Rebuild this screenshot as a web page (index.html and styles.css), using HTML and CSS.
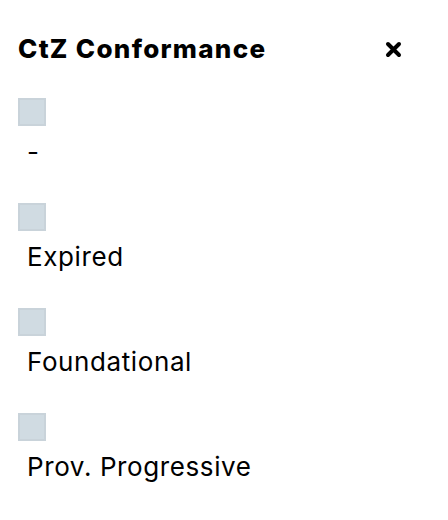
FILE: index.html
```html
<!DOCTYPE html>
<html>
<head>
<meta charset="utf-8">
<link rel="stylesheet" href="styles.css">
</head>
<body>
<div class="panel">
  <div class="header">
    <h2 class="title">CtZ Conformance</h2>
    <button class="close" aria-label="Close">
      <svg width="17" height="17" viewBox="0 0 17 17"><path d="M3 3 L14 14 M14 3 L3 14" stroke="#000" stroke-width="4" stroke-linecap="round"/></svg>
    </button>
  </div>
  <ul class="list">
    <li class="item"><span class="box"></span><span class="label">-</span></li>
    <li class="item"><span class="box"></span><span class="label">Expired</span></li>
    <li class="item"><span class="box"></span><span class="label">Foundational</span></li>
    <li class="item"><span class="box"></span><span class="label">Prov. Progressive</span></li>
  </ul>
</div>
</body>
</html>
```
FILE: styles.css
```css
html, body {
  margin: 0;
  padding: 0;
  background: #fff;
}
body {
  font-family: Inter, "Liberation Sans", sans-serif;
  color: #000;
}
.panel {
  padding: 34px 18px 0 18px;
}
.header {
  display: flex;
  justify-content: space-between;
  align-items: center;
  height: 30px;
}
.title {
  margin: 0;
  font-size: 26px;
  font-weight: 800;
  line-height: 30px;
  letter-spacing: 1.3px;
}
.close {
  border: 0;
  background: none;
  padding: 0;
  margin-right: 28px;
  display: flex;
}
.list {
  list-style: none;
  margin: 34px 0 0 0;
  padding: 0;
  display: flex;
  flex-direction: column;
  gap: 14px;
}
.item {
  display: flex;
  flex-direction: column;
  align-items: flex-start;
}
.box {
  width: 28px;
  height: 28px;
  box-sizing: border-box;
  background: #d0dbe2;
  border: 2px solid #c9d3da;
}
.label {
  font-size: 26px;
  line-height: 51px;
  height: 51px;
  margin-bottom: 12px;
  padding-left: 9px;
  letter-spacing: 0.6px;
}
```
